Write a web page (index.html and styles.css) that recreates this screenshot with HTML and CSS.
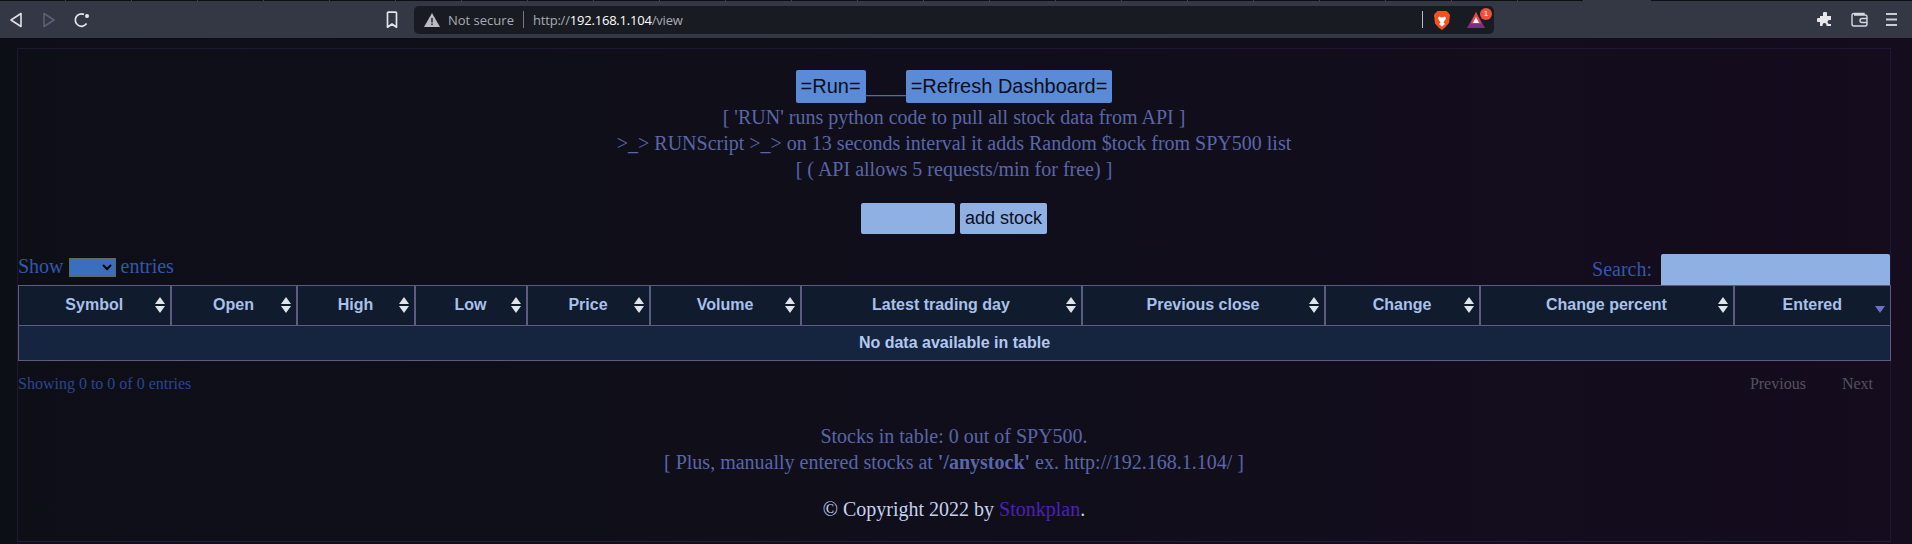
FILE: index.html
```html
<!DOCTYPE html>
<html lang="en">
<head>
<meta charset="utf-8">
<title>Stonkplan</title>
<link rel="stylesheet" href="styles.css">
</head>
<body>
<header class="chrome">
  <div class="tabstrip"><div class="tabs-left"></div><div class="tab-active"></div><div class="tabs-right"></div></div>
  <div class="toolbar">
    <div class="nav">
      <svg class="ic" width="14" height="18" viewBox="0 0 14 18"><path d="M12 2.500v13L2 9z" fill="none" stroke="#dfe1e6" stroke-width="1.600" stroke-linejoin="round"/></svg>
      <svg class="ic" width="14" height="18" viewBox="0 0 14 18"><path d="M2 2.500v13L12 9z" fill="none" stroke="#5c6070" stroke-width="1.600" stroke-linejoin="round"/></svg>
      <svg class="ic" width="18" height="18" viewBox="0 0 18 18"><path d="M13.600 12.600A6.200 6.200 0 1 1 11 3.400" fill="none" stroke="#e4e6ea" stroke-width="1.700"/><circle cx="14" cy="5" r="2" fill="#e4e6ea"/></svg>
    </div>
    <svg class="bookmark" width="12" height="18" viewBox="0 0 12 18"><path d="M1.500 2.200q0-1 1-1h7q1 0 1 1v14L6 13l-4.500 3.200z" fill="none" stroke="#e2e4e9" stroke-width="1.700" stroke-linejoin="round"/></svg>
    <div class="omnibox">
      <svg class="warn" width="16" height="14" viewBox="0 0 16 14"><path d="M8 0l8 14H0z" fill="#b9bbc1"/><path d="M7.300 5h1.400v4.500H7.300zM7.300 10.500h1.400V12H7.300z" fill="#1a1d25"/></svg>
      <span class="insecure">Not secure</span>
      <span class="omni-div"></span>
      <span class="url">http://<b>192.168.1.104</b>/view</span>
      <span class="omni-spacer"></span>
      <span class="omni-div2"></span>
      <svg class="brave" width="16" height="20" viewBox="0 0 16 20"><path d="M3.500 1h9L15 3.500l1 1.500-1 8-3.500 4L8 20l-3.500-2.500L1 13.500 0 5l1-1.500z" fill="#f4511e"/><path d="M5 6.500l3 1 3-1 1 2-2.500 4L11 14l-3 2.500L5 14l1.500-1.500L4 8.500z" fill="#fff"/></svg>
      <span class="bat">
        <svg width="18" height="16" viewBox="0 0 18 16"><path d="M9 0l9 16H0z" fill="#7b2d8e"/><path d="M9 0l5.500 11.500h-11z" fill="#e8463c"/><path d="M9 5l3 6H6z" fill="#fff"/></svg>
        <span class="badge">1</span>
      </span>
    </div>
    <div class="actions">
      <svg width="16" height="16" viewBox="0 0 16 16"><path d="M6 1.500a2 2 0 0 1 4 0V4h4v4h-1.500a2 2 0 0 0 0 4H14v2H9.500v-1a2 2 0 0 0-4 0v1H3v-4H1.500a2 2 0 0 1 0-4H3V4h3z" fill="#e6e8ec"/></svg>
      <svg width="17" height="15" viewBox="0 0 17 15"><path d="M13 3V1.500H3Q1 1.500 1 3.500V12q0 2 2 2h11q2 0 2-2V5q0-2-2-2H3" fill="none" stroke="#d5d8de" stroke-width="1.400"/><path d="M16 6.500h-5a1.700 1.700 0 0 0 0 4h5" fill="none" stroke="#d5d8de" stroke-width="1.400"/></svg>
      <svg width="11" height="13" viewBox="0 0 11 13"><path d="M0 1h11M0 6.500h11M0 12h11" stroke="#c9ccd3" stroke-width="2"/></svg>
    </div>
  </div>
</header>

<main class="page">
  <section class="hero">
    <div class="hero-actions"><a class="btn">=Run=</a><span class="gap">____</span><a class="btn">=Refresh Dashboard=</a></div>
    <p class="note">[ 'RUN' runs python code to pull all stock data from API ]</p>
    <p class="note">&gt;_&gt; RUNScript &gt;_&gt; on 13 seconds interval it adds Random $tock from SPY500 list</p>
    <p class="note">[ ( API allows 5 requests/min for free) ]</p>
  </section>

  <form class="add-form">
    <input class="add-input" type="text" aria-label="Stock symbol">
    <button class="add-btn" type="button">add stock</button>
  </form>

  <section class="dt">
    <div class="dt-top">
      <label class="dt-length">Show <select class="dt-select" aria-label="entries"></select> entries</label>
      <label class="dt-search">Search: <input class="dt-search-input" type="search"></label>
    </div>
    <table class="grid">
      <thead>
        <tr>
          <th class="sortable">Symbol</th>
          <th class="sortable">Open</th>
          <th class="sortable">High</th>
          <th class="sortable">Low</th>
          <th class="sortable">Price</th>
          <th class="sortable">Volume</th>
          <th class="sortable">Latest trading day</th>
          <th class="sortable">Previous close</th>
          <th class="sortable">Change</th>
          <th class="sortable">Change percent</th>
          <th class="sorted">Entered</th>
        </tr>
      </thead>
      <tbody>
        <tr><td colspan="11">No data available in table</td></tr>
      </tbody>
    </table>
    <div class="dt-bottom">
      <div class="dt-info">Showing 0 to 0 of 0 entries</div>
      <div class="dt-pager"><a>Previous</a><a>Next</a></div>
    </div>
  </section>

  <footer class="foot">
    <p class="note">Stocks in table: 0 out of SPY500.</p>
    <p class="note">[ Plus, manually entered stocks at <b>'/anystock'</b> ex. http://192.168.1.104/ ]</p>
    <p class="copy">© Copyright 2022 by <a class="brand">Stonkplan</a>.</p>
  </footer>
</main>
</body>
</html>
```

FILE: styles.css
```css
* { box-sizing: border-box; }
html, body { height: 544px; overflow: hidden; }
body {
  margin: 0;
  background: linear-gradient(to right, #0d0f17 0%, #100e1a 50%, #150c1e 100%);
  font-family: "Liberation Serif", "Times New Roman", serif;
  color: #5a66a8;
}

/* browser chrome */
.chrome { height: 38px; background: #343845; }
.tabstrip { display: flex; height: 1px; }
.tabs-left {
  width: 1584px;
  background: repeating-linear-gradient(to right, #0e0f15 0, #0e0f15 65px, #454853 65px, #454853 66px);
}
.tab-active { width: 67px; background: #343845; }
.tabs-right { flex: 1; background: #0e0f15; }
.toolbar { display: flex; align-items: center; height: 37px; position: relative; }
.nav { display: flex; align-items: center; width: 385px; padding-left: 9px; }
.nav .ic:nth-child(2) { margin-left: 19px; }
.nav .ic:nth-child(3) { margin-left: 17px; }
.bookmark { margin-left: 1px; flex: none; }
.omnibox {
  display: flex; align-items: center;
  width: 1080px; height: 28px; margin-left: 16px;
  padding-left: 10px;
  background: #181b22; border-radius: 5px;
  font-family: "Open Sans", "Noto Sans", sans-serif; font-size: 13px; color: #a8abb3;
}
.warn { flex: none; }
.insecure { margin-left: 8px; width: 67px; white-space: nowrap; }
.omni-div { width: 1px; height: 17px; background: #777a84; margin-left: 8px; }
.url { margin-left: 9px; white-space: nowrap; letter-spacing: -0.2px; }
.url b { font-weight: 400; color: #fff; }
.omni-spacer { flex: 1; }
.omni-div2 { width: 1px; height: 17px; background: #b9bbc1; }
.brave { margin-left: 11px; flex: none; }
.bat { position: relative; display: flex; margin-left: 17px; margin-right: 9px; }
.badge {
  position: absolute; left: 13px; top: -4px;
  width: 12px; height: 12px; border-radius: 50%;
  background: #f1503c; color: #fff;
  font: 8px/12px "Liberation Sans", sans-serif; text-align: center;
}
.actions { display: flex; align-items: center; gap: 18px; margin-left: 323px; }

/* page */
.page {
  height: 494px; margin: 10px 21px 0 17px;
  border: 1px solid #1f1830;
  border-bottom-color: #231d3a;
}
.hero { padding-top: 21px; text-align: center; }
.hero-actions { height: 34px; font-size: 20px; color: #5a6a9f; white-space: nowrap; }
.btn {
  display: inline-block; height: 33px; padding: 0 5px;
  background: #5b8bd6; border-radius: 2px;
  font: 20px/33px "Liberation Sans", sans-serif; color: #0a0f1c;
}
.note { margin: 0; font-size: 20px; line-height: 26px; color: #5a66a8; }

.add-form { display: flex; justify-content: center; gap: 5px; margin-top: 21px; }
.add-input {
  width: 94px; height: 31px; border: 0; border-radius: 2px; background: #8fb0e3; padding: 0;
}
.add-btn {
  width: 87px; height: 31px; padding: 0; border: 0; border-radius: 2px;
  background: #8fb0e3; color: #0a0f1c;
  font: 18px "Liberation Sans", sans-serif;
}

.dt { margin-top: 20px; }
.dt-top { display: flex; justify-content: space-between; height: 31px; font-size: 20px; color: #3357ac; }
.dt-length { display: flex; align-items: center; height: 26px; margin-top: -1px; gap: 5px; }
.dt-select {
  width: 47px; height: 19px; margin: 2px 0 0 0;
  background: #3a6fc0; border: 1px solid #5f6a5c; border-radius: 0; color: #000;
}
.dt-search { display: flex; align-items: center; gap: 9px; }
.dt-search-input {
  width: 229px; height: 31px; padding: 0; border: 0; border-radius: 2px 2px 0 0;
  background: #8fb0e3; outline: 0; appearance: none;
}

.grid {
  width: 1872px; table-layout: fixed; border-collapse: collapse;
  font-family: "Liberation Sans", sans-serif; font-size: 16px; font-weight: 700;
  color: #a9c1ea;
}
.grid th, .grid td { border: 1px solid #5d5b80; text-align: center; padding: 0; }
.grid th { border-left-width: 2px; border-right-width: 2px; padding-bottom: 2px; }
.grid th:first-child { border-left-width: 1px; }
.grid th:last-child { border-right-width: 1px; }
.grid thead tr { height: 40px; }
.grid tbody tr { height: 35px; }
.grid th { position: relative; background: #101b2e; }
.grid td { background: #15243f; color: #b3c8ee; }
.grid th:nth-child(1) { width: 152px; }
.grid th:nth-child(2) { width: 126px; }
.grid th:nth-child(3) { width: 118px; }
.grid th:nth-child(4) { width: 112px; }
.grid th:nth-child(5) { width: 123px; }
.grid th:nth-child(6) { width: 151px; }
.grid th:nth-child(7) { width: 281px; }
.grid th:nth-child(8) { width: 243px; }
.grid th:nth-child(9) { width: 155px; }
.grid th:nth-child(10) { width: 254px; }
.grid th:nth-child(11) { width: 157px; }

.sortable::before, .sortable::after, .sorted::after {
  content: ""; position: absolute; right: 5px;
  border-left: 5px solid transparent; border-right: 5px solid transparent;
}
.sortable::before { top: 11px; border-bottom: 7px solid #dfe3ea; }
.sortable::after { top: 20px; border-top: 7px solid #dfe3ea; }
.sorted::after { top: 20px; right: 5px; border-top: 7px solid #6f6fc8; }

.dt-bottom { display: flex; justify-content: space-between; align-items: center; height: 26px; margin-top: 10px; }
.dt-info { font-size: 16px; color: #2b4690; }
.dt-pager { display: flex; gap: 36px; padding-right: 17px; font-size: 16px; color: #55525f; }

.foot { margin-top: 26px; text-align: center; }
.copy { margin: 21px 0 0; font-size: 20px; line-height: 26px; color: #c6d2ee; }
.brand { color: #4a22b8; }
```
